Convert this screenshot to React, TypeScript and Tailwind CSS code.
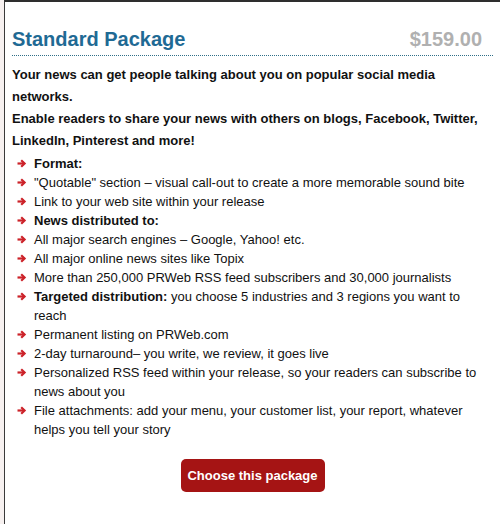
import React from "react";

const Arrow = () => (
  <svg width="10" height="9" viewBox="0 0 10 9" className="shrink-0 mt-[5px]">
    <path d="M0.5 4.5 H7" stroke="#cc2229" strokeWidth="2.2" />
    <path d="M4.2 1.2 L7.6 4.5 L4.2 7.8" stroke="#cc2229" strokeWidth="2.2" fill="none" />
  </svg>
);

type Item = { bold?: string; text?: string };

const items: Item[] = [
  { bold: "Format:" },
  { text: "\"Quotable\" section – visual call-out to create a more memorable sound bite" },
  { text: "Link to your web site within your release" },
  { bold: "News distributed to:" },
  { text: "All major search engines – Google, Yahoo! etc." },
  { text: "All major online news sites like Topix" },
  { text: "More than 250,000 PRWeb RSS feed subscribers and 30,000 journalists" },
  { bold: "Targeted distribution:", text: " you choose 5 industries and 3 regions you want to reach" },
  { text: "Permanent listing on PRWeb.com" },
  { text: "2-day turnaround– you write, we review, it goes live" },
  { text: "Personalized RSS feed within your release, so your readers can subscribe to news about you" },
  { text: "File attachments: add your menu, your customer list, your report, whatever helps you tell your story" },
];

export default function App() {
  return (
    <div className="w-[500px] h-[524px] bg-white flex" style={{ fontFamily: '"Liberation Sans", Arial, sans-serif' }}>
      <div className="w-[4px] bg-[#f7f1f0]" />
      <div className="flex-1 border-l border-t-2 border-[#2e2e2e] border-l-[#3a3a3a] pl-[7px] pr-[7px]">
        <div className="flex items-end justify-between border-b border-dotted border-[#2f6f88] pt-[24px] pb-[3px] pr-[11px]">
          <h1 className="text-[20px] leading-[26px] font-bold text-[#1f6a94]">Standard Package</h1>
          <span className="text-[20px] leading-[26px] font-bold text-[#b0b0b0]">$159.00</span>
        </div>
        <div className="mt-[8px] text-[13px] leading-[22px] font-bold text-[#111]">
          <p>Your news can get people talking about you on popular social media networks.</p>
          <p>Enable readers to share your news with others on blogs, Facebook, Twitter, LinkedIn, Pinterest and more!</p>
        </div>
        <ul className="mt-[2px] text-[13px] leading-[19px] text-[#111]">
          {items.map((it, i) => (
            <li key={i} className="flex gap-[7px] pl-[5px]">
              <Arrow />
              <span>
                {it.bold && <b>{it.bold}</b>}
                {it.text}
              </span>
            </li>
          ))}
        </ul>
        <div className="flex justify-center mt-[20px]">
          <button className="bg-[#a51414] text-white font-bold text-[13px] rounded-[5px] w-[144px] h-[33px]">
            Choose this package
          </button>
        </div>
      </div>
    </div>
  );
}
